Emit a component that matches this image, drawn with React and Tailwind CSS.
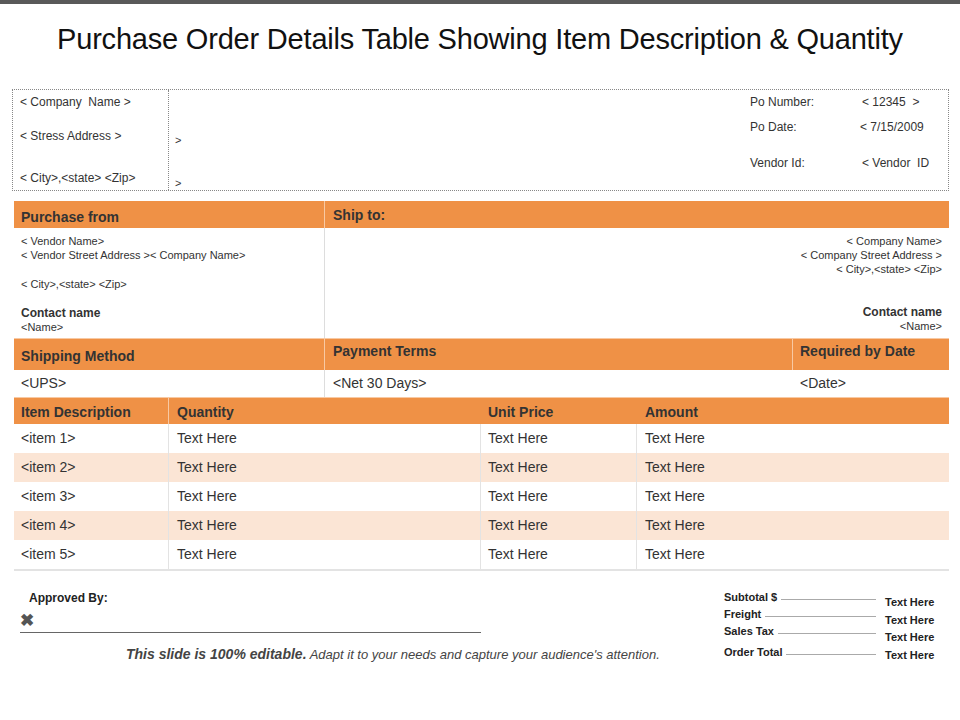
export default function App() {
  const items = [1, 2, 3, 4, 5];
  const nar = { fontFamily: '"Liberation Sans Narrow","Arial Narrow","Liberation Sans",sans-serif' };
  return (
    <div className="w-[960px] h-[720px] bg-white text-[#222] relative overflow-hidden" style={{ fontFamily: '"Liberation Sans",Arial,sans-serif' }}>
      <div className="h-[4px] bg-[#595959]" />
      <h1 className="text-center text-[29px] text-[#111] mt-[18px] h-[60px] leading-[34px] tracking-[-0.2px]">Purchase Order Details Table Showing Item Description &amp; Quantity</h1>
      <div className="ml-[12px] mr-[11px] mt-[7px] h-[102px] border border-dotted border-[#888] flex text-[12px] text-[#333]">
        <div className="w-[156px] border-r border-dotted border-[#888] pl-[7px] pt-[3px]">
          <div>&lt; Company&nbsp; Name &gt;</div>
          <div className="mt-[16px]">&lt; Stress Address &gt;</div>
          <div className="mt-[24px]">&lt; City&gt;,&lt;state&gt; &lt;Zip&gt;</div>
        </div>
        <div className="flex-1 flex pl-[6px]">
          <div className="flex flex-col pt-[42px] gap-[26px] text-[11px]"><span>&gt;</span><span>&gt;</span></div>
          <div className="ml-auto w-[198px] pt-[3px]">
            <div className="flex"><span className="w-[112px]">Po Number:</span><span>&lt; 12345&nbsp; &gt;</span></div>
            <div className="flex mt-[7px]"><span className="w-[110px]">Po Date:</span><span>&lt; 7/15/2009</span></div>
            <div className="flex mt-[18px]"><span className="w-[112px]">Vendor Id:</span><span>&lt; Vendor&nbsp; ID</span></div>
          </div>
        </div>
      </div>
      <div className="ml-[14px] mr-[11px] mt-[10px]">
        <div className="flex h-[27px] bg-[#ef9146] text-[14px] font-bold text-[#333]">
          <div className="w-[311px] pl-[7px] pt-[6px] border-r border-[#f8c9a3]">Purchase from</div>
          <div className="flex-1 pl-[8px] pt-[4px]">Ship to:</div>
        </div>
        <div className="flex h-[110px] text-[11px] text-[#333]">
          <div className="w-[311px] pl-[7px] pt-[6px] border-r border-[#ddd] leading-[14px]">
            <div>&lt; Vendor Name&gt;</div>
            <div>&lt; Vendor Street Address &gt;&lt; Company Name&gt;</div>
            <div className="mt-[15px]">&lt; City&gt;,&lt;state&gt; &lt;Zip&gt;</div>
            <div className="mt-[15px] font-bold text-[12px]">Contact name</div>
            <div>&lt;Name&gt;</div>
          </div>
          <div className="flex-1 pr-[7px] pt-[6px] text-right leading-[14px]">
            <div>&lt; Company Name&gt;</div>
            <div>&lt; Company Street Address &gt;</div>
            <div>&lt; City&gt;,&lt;state&gt; &lt;Zip&gt;</div>
            <div className="mt-[29px] font-bold text-[12px]">Contact name</div>
            <div>&lt;Name&gt;</div>
          </div>
        </div>
        <div style={nar}>
          <div className="flex h-[32px] bg-[#ef9146] text-[14px] font-bold text-[#333] border-t border-[#f8c9a3]">
            <div className="w-[311px] pl-[7px] pt-[7px] border-r border-[#f8c9a3]">Shipping Method</div>
            <div className="w-[468px] pl-[8px] pt-[2px] border-r border-[#f8c9a3]">Payment Terms</div>
            <div className="flex-1 pl-[7px] pt-[2px]">Required by Date</div>
          </div>
          <div className="flex h-[27px] text-[14px] text-[#333] items-center">
            <div className="w-[311px] pl-[7px] h-full flex items-center border-r border-[#ddd]">&lt;UPS&gt;</div>
            <div className="w-[468px] pl-[8px]">&lt;Net 30 Days&gt;</div>
            <div className="flex-1 pl-[7px]">&lt;Date&gt;</div>
          </div>
          <div className="grid grid-cols-[155px_312px_156px_1fr] h-[27px] bg-[#ef9146] text-[14px] font-bold text-[#333] border-t border-[#f8c9a3]">
            <div className="pl-[7px] pt-[4px] border-r border-[#f8c9a3]">Item Description</div>
            <div className="pl-[8px] pt-[4px]">Quantity</div>
            <div className="pl-[7px] pt-[4px]">Unit Price</div>
            <div className="pl-[8px] pt-[4px]">Amount</div>
          </div>
          {items.map((i) => (
            <div key={i} className={`grid grid-cols-[155px_312px_156px_1fr] h-[29px] text-[14px] text-[#333] items-center ${i % 2 === 0 ? "bg-[#fbe5d5]" : "bg-white"}`}>
              <div className="pl-[7px] h-full flex items-center border-r border-[#e3e3e3]">&lt;item {i}&gt;</div>
              <div className="pl-[8px] h-full flex items-center border-r border-[#e3e3e3]">Text Here</div>
              <div className="pl-[7px] h-full flex items-center border-r border-[#e3e3e3]">Text Here</div>
              <div className="pl-[8px]">Text Here</div>
            </div>
          ))}
          <div className="h-[2px] bg-[#e3e3e3]" />
        </div>
      </div>
      <div className="flex mt-[18px]" style={nar}>
        <div className="w-[700px] pl-[20px]">
          <div className="text-[12px] font-bold text-[#222] pl-[9px]">Approved By:</div>
          <div className="w-[461px] border-b border-[#666] text-[17px] font-bold text-[#555] leading-[18px] mt-[5px] pb-[2px]">✖</div>
          <div className="text-[13px] text-[#444] italic mt-[11px] pl-[106px]"><b className="text-[14px]">This slide is 100% editable.</b> Adapt it to your needs and capture your audience's attention.</div>
        </div>
        <div className="flex-1 text-[11px] font-bold text-[#222] relative h-[80px] ml-[24px]">
          {[["Subtotal $", 0], ["Freight", 17], ["Sales Tax", 34], ["Order Total", 55]].map(([l, t]) => (
            <div key={l} className="absolute left-0 flex items-center w-[152px]" style={{ top: t }}>
              <span>{l}</span><div className="flex-1 border-b border-[#aaa] ml-[4px] mt-[4px]" />
            </div>
          ))}
          {[5, 23, 40, 58].map((t) => (
            <div key={t} className="absolute left-[161px]" style={{ top: t }}>Text Here</div>
          ))}
        </div>
      </div>
    </div>
  );
}
